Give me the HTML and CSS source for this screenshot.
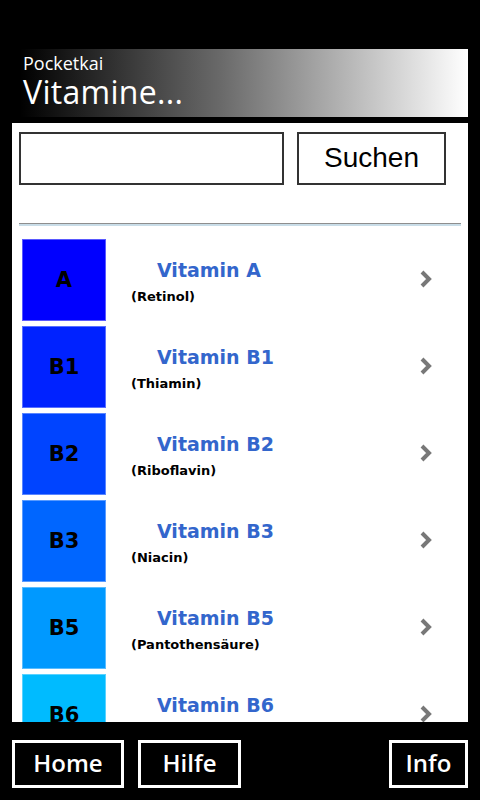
FILE: index.html
```html
<!DOCTYPE html>
<html lang="de">
<head>
  <meta charset="UTF-8" />
  <title>Pocketkai - Vitamine</title>
  <link rel="stylesheet" href="styles.css">
</head>
<body>
  <div class="header">
    <div class="app-name">Pocketkai</div>
    <div class="page-title">Vitamine...</div>
  </div>

  <div class="content">
    <div class="search">
      <input class="search-input" type="text" />
      <button class="search-btn">Suchen</button>
    </div>
    <div class="divider"></div>

    <div class="list">
      <div class="row">
        <div class="tile" style="background:#0000ff">A</div>
        <div class="info">
          <div class="title">Vitamin A</div>
          <div class="sub">(Retinol)</div>
        </div>
        <div class="chev"><svg width="14" height="18" viewBox="0 0 14 18"><path d="M3 2 L10 9 L3 16" fill="none" stroke="#787878" stroke-width="4"/></svg></div>
      </div>
      <div class="row">
        <div class="tile" style="background:#0022ff">B1</div>
        <div class="info">
          <div class="title">Vitamin B1</div>
          <div class="sub">(Thiamin)</div>
        </div>
        <div class="chev"><svg width="14" height="18" viewBox="0 0 14 18"><path d="M3 2 L10 9 L3 16" fill="none" stroke="#787878" stroke-width="4"/></svg></div>
      </div>
      <div class="row">
        <div class="tile" style="background:#0044ff">B2</div>
        <div class="info">
          <div class="title">Vitamin B2</div>
          <div class="sub">(Riboflavin)</div>
        </div>
        <div class="chev"><svg width="14" height="18" viewBox="0 0 14 18"><path d="M3 2 L10 9 L3 16" fill="none" stroke="#787878" stroke-width="4"/></svg></div>
      </div>
      <div class="row">
        <div class="tile" style="background:#0066ff">B3</div>
        <div class="info">
          <div class="title">Vitamin B3</div>
          <div class="sub">(Niacin)</div>
        </div>
        <div class="chev"><svg width="14" height="18" viewBox="0 0 14 18"><path d="M3 2 L10 9 L3 16" fill="none" stroke="#787878" stroke-width="4"/></svg></div>
      </div>
      <div class="row">
        <div class="tile" style="background:#0099ff">B5</div>
        <div class="info">
          <div class="title">Vitamin B5</div>
          <div class="sub">(Pantothensäure)</div>
        </div>
        <div class="chev"><svg width="14" height="18" viewBox="0 0 14 18"><path d="M3 2 L10 9 L3 16" fill="none" stroke="#787878" stroke-width="4"/></svg></div>
      </div>
      <div class="row">
        <div class="tile" style="background:#00bbff">B6</div>
        <div class="info">
          <div class="title">Vitamin B6</div>
          <div class="sub">(Pyridoxin)</div>
        </div>
        <div class="chev"><svg width="14" height="18" viewBox="0 0 14 18"><path d="M3 2 L10 9 L3 16" fill="none" stroke="#787878" stroke-width="4"/></svg></div>
      </div>
    </div>
  </div>

  <div class="footer">
    <button class="nav-btn home">Home</button>
    <button class="nav-btn hilfe">Hilfe</button>
    <button class="nav-btn info-btn">Info</button>
  </div>
</body>
</html>
```

FILE: styles.css
```css
body {
  margin: 0;
  width: 480px;
  height: 800px;
  background: #000;
  overflow: hidden;
  font-family: "Open Sans", sans-serif;
}
.header {
  margin: 49px 12px 0 20px;
  height: 68px;
  padding-left: 3px;
  background: linear-gradient(to right, #000 0%, #6a6a6a 45%, #fff 100%);
  color: #fff;
  box-sizing: border-box;
  overflow: hidden;
}
.app-name {
  font-size: 18px;
  line-height: 22px;
  padding-top: 3px;
}
.page-title {
  font-size: 32px;
  line-height: 36px;
  letter-spacing: 0.3px;
}
.content {
  margin: 6px 12px 0 12px;
  height: 599px;
  background: #fff;
  overflow: hidden;
}
.search {
  display: flex;
  padding: 9px 0 0 7px;
  gap: 13px;
}
.search-input {
  width: 265px;
  height: 53px;
  box-sizing: border-box;
  border: 2px solid #333;
  margin: 0;
}
.search-btn {
  width: 149px;
  height: 53px;
  box-sizing: border-box;
  border: 2px solid #333;
  background: #fff;
  font-family: "Liberation Sans", Arial, sans-serif;
  font-size: 28px;
  color: #000;
  padding: 0 0 2px 0;
  margin: 0;
}
.divider {
  margin: 38px 7px 0 7px;
  height: 1px;
  background: #8e8e8e;
  border-bottom: 2px solid #c9dde8;
}
.list {
  padding: 13px 0 0 10px;
  font-family: "DejaVu Sans", Tahoma, sans-serif;
  font-weight: bold;
}
.row {
  display: flex;
  height: 87px;
}
.tile {
  width: 84px;
  height: 82px;
  box-sizing: border-box;
  border: 1px solid rgba(255, 255, 255, 0.35);
  font-size: 21px;
  color: #000;
  display: flex;
  align-items: center;
  justify-content: center;
}
.info {
  width: 288px;
  padding-left: 25px;
  padding-top: 19px;
}
.title {
  color: #3366cc;
  font-size: 19px;
  padding-left: 26px;
  line-height: 24px;
}
.sub {
  font-size: 13px;
  color: #000;
  line-height: 18px;
  margin-top: 6px;
}
.chev {
  padding-top: 31px;
}
.footer {
  display: flex;
  padding: 18px 12px 0 12px;
  gap: 14px;
}
.nav-btn {
  height: 48px;
  box-sizing: border-box;
  border: 3px solid #fff;
  background: #000;
  color: #fff;
  font-family: "Open Sans", sans-serif;
  font-weight: 600;
  font-size: 24px;
  padding: 0 0 3px 0;
  margin: 0;
}
.home {
  width: 112px;
}
.hilfe {
  width: 103px;
}
.info-btn {
  width: 79px;
  margin-left: auto;
}
```
